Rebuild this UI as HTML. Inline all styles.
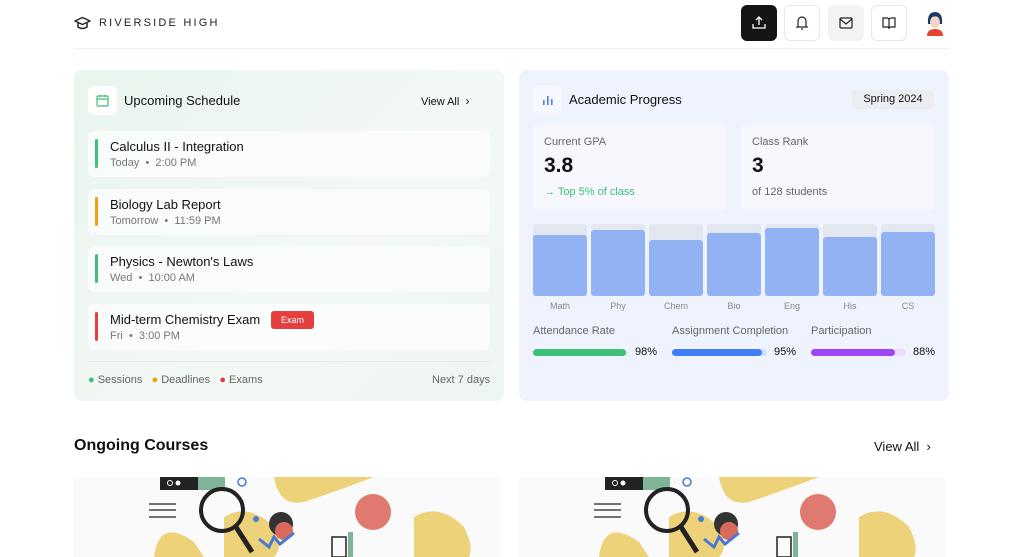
<!DOCTYPE html>
<html><head><meta charset="utf-8"><style>
*{box-sizing:border-box;margin:0;padding:0}
body{width:1024px;height:557px;overflow:hidden;background:#fff;font-family:"Liberation Sans",sans-serif;color:#111;position:relative}
.abs{position:absolute}
.btn{position:absolute;top:5px;width:36px;height:36px;border-radius:6px;border:1px solid #e8e8e8;background:#fff;display:flex;align-items:center;justify-content:center}
.card{position:absolute;border-radius:8px}
.item{position:absolute;left:14px;width:402px;height:46px;background:rgba(255,255,255,.65);border-radius:6px}
.item .bar{position:absolute;left:7px;top:8px;width:3px;height:29px;border-radius:2px}
.item .t{position:absolute;left:22px;top:8px;font-size:13px;color:#111}
.item .s{position:absolute;left:22px;top:26px;font-size:11px;color:#777}
.lbl{font-size:11px;color:#666}
.col{position:absolute;top:154px;width:54px;height:72px;background:#e3e8f0;border-radius:3px;overflow:hidden}
.col div{position:absolute;bottom:0;left:0;right:0;background:#93b2f4;border-radius:3px 3px 0 0}
.cn{position:absolute;top:231px;width:54px;text-align:center;font-size:9px;color:#888}
</style></head><body>
<svg class="abs" style="left:74px;top:16px" width="17" height="14" viewBox="0 0 17 14"><path d="M1 5 L8.5 1.5 L16 5 L8.5 8.5 Z" fill="none" stroke="#222" stroke-width="1.5" stroke-linejoin="round"/><path d="M4 7 V11 Q8.5 14 13 11 V7" fill="none" stroke="#222" stroke-width="1.5"/></svg>
<div class="abs" style="left:99px;top:17px;font-size:11px;letter-spacing:2.2px;color:#222">RIVERSIDE HIGH</div>
<div class="btn" style="left:741px;background:#141414;border-color:#141414"><svg width="14" height="14" viewBox="0 0 14 14" fill="none" stroke="#fff" stroke-width="1.3"><path d="M7 9V1M4 4l3-3 3 3M1 8v4h12V8"/></svg></div>
<div class="btn" style="left:784px"><svg width="14" height="16" viewBox="0 0 14 16" fill="none" stroke="#222" stroke-width="1.2"><path d="M3 11V6a4 4 0 0 1 8 0v5l1 1H2z"/><path d="M6 14h2"/></svg></div>
<div class="btn" style="left:828px;background:#f3f3f3;border-color:#f3f3f3"><svg width="14" height="12" viewBox="0 0 14 12" fill="none" stroke="#222" stroke-width="1.2"><rect x="1" y="1" width="12" height="10" rx="1"/><path d="M1 2l6 5 6-5"/></svg></div>
<div class="btn" style="left:871px"><svg width="14" height="12" viewBox="0 0 14 12" fill="none" stroke="#222" stroke-width="1.2"><path d="M1 1h4a2 2 0 0 1 2 2v8a2 2 0 0 0-2-1H1zM13 1H9a2 2 0 0 0-2 2v8a2 2 0 0 1 2-1h4z"/></svg></div>
<svg class="abs" style="left:924px;top:10px" width="22" height="26" viewBox="0 0 22 26"><path d="M4 14 Q3 2 11 2 Q19 2 18 14 Z" fill="#1d3a66"/><ellipse cx="11" cy="12" rx="5" ry="6" fill="#f3d6c8"/><path d="M5 9 Q11 2 17 9 Q14 5 8 7Z" fill="#1d3a66"/><path d="M3 26 Q3 19 11 19 Q19 19 19 26 Z" fill="#e6452f"/></svg>
<div class="abs" style="left:74px;top:48px;width:876px;height:1px;background:#eee"></div>

<div class="card" style="left:74px;top:70px;width:430px;height:331px;background:linear-gradient(135deg,#e9f5ee,#f3f8f5 60%,#eef6f1)">
 <div class="abs" style="left:14px;top:16px;width:29px;height:29px;background:#fff;border-radius:6px;display:flex;align-items:center;justify-content:center"><svg width="13" height="13" viewBox="0 0 13 13" fill="none" stroke="#3fbf7a" stroke-width="1.2"><rect x="1" y="2" width="11" height="10" rx="1"/><path d="M1 5h11M4 1v2M9 1v2"/></svg></div>
 <div class="abs" style="left:50px;top:23px;font-size:13px">Upcoming Schedule</div>
 <div class="abs" style="left:347px;top:24px;font-size:11px">View All &nbsp;<span style="font-size:12px">›</span></div>
 <div class="item" style="top:61px"><div class="bar" style="background:#3fbf7a"></div><div class="t">Calculus II - Integration</div><div class="s">Today &nbsp;•&nbsp; 2:00 PM</div></div>
 <div class="item" style="top:119px"><div class="bar" style="background:#f29d12"></div><div class="t">Biology Lab Report</div><div class="s">Tomorrow &nbsp;•&nbsp; 11:59 PM</div></div>
 <div class="item" style="top:176px"><div class="bar" style="background:#3fbf7a"></div><div class="t">Physics - Newton's Laws</div><div class="s">Wed &nbsp;•&nbsp; 10:00 AM</div></div>
 <div class="item" style="top:234px"><div class="bar" style="background:#e53e3e"></div><div class="t">Mid-term Chemistry Exam</div><div class="s">Fri &nbsp;•&nbsp; 3:00 PM</div><div class="abs" style="left:183px;top:7px;width:43px;height:18px;background:#e53e3e;border-radius:3px;color:#fff;font-size:9px;text-align:center;line-height:18px">Exam</div></div>
 <div class="abs" style="left:14px;top:291px;width:402px;height:1px;background:#e4ece7"></div>
 <div class="abs lbl" style="left:14px;top:304px"><span style="color:#3fbf7a">●</span> Sessions &nbsp; <span style="color:#f29d12">●</span> Deadlines &nbsp; <span style="color:#e53e3e">●</span> Exams</div>
 <div class="abs lbl" style="left:358px;top:304px">Next 7 days</div>
</div>

<div class="card" style="left:519px;top:70px;width:430px;height:331px;background:#eef3fd">
 <div class="abs" style="left:14px;top:15px;width:29px;height:29px;background:#f6f8fe;border-radius:6px;display:flex;align-items:center;justify-content:center"><svg width="10" height="10" viewBox="0 0 10 10" fill="#4a7ef0"><rect x="0" y="5" width="1.6" height="5"/><rect x="4" y="1" width="1.6" height="9"/><rect x="8" y="4" width="1.6" height="6"/></svg></div>
 <div class="abs" style="left:50px;top:22px;font-size:13px">Academic Progress</div>
 <div class="abs" style="left:333px;top:20px;width:82px;height:19px;background:#ebedf0;border-radius:4px;font-size:11px;text-align:center;line-height:19px">Spring 2024</div>
 <div class="abs" style="left:14px;top:54px;width:194px;height:86px;background:#f6f8fd;border-radius:6px">
  <div class="abs lbl" style="left:11px;top:12px">Current GPA</div>
  <div class="abs" style="left:11px;top:30px;font-size:21px;font-weight:bold">3.8</div>
  <div class="abs" style="left:11px;top:62px;font-size:11px;color:#3fbf7a">→ Top 5% of class</div>
 </div>
 <div class="abs" style="left:222px;top:54px;width:194px;height:86px;background:#f6f8fd;border-radius:6px">
  <div class="abs lbl" style="left:11px;top:12px">Class Rank</div>
  <div class="abs" style="left:11px;top:30px;font-size:21px;font-weight:bold">3</div>
  <div class="abs lbl" style="left:11px;top:62px">of 128 students</div>
 </div>
 <div class="col" style="left:14px"><div style="height:61px"></div></div>
 <div class="col" style="left:72px"><div style="height:66px"></div></div>
 <div class="col" style="left:130px"><div style="height:56px"></div></div>
 <div class="col" style="left:188px"><div style="height:63px"></div></div>
 <div class="col" style="left:246px"><div style="height:68px"></div></div>
 <div class="col" style="left:304px"><div style="height:59px"></div></div>
 <div class="col" style="left:362px"><div style="height:64px"></div></div>
 <div class="cn" style="left:14px">Math</div><div class="cn" style="left:72px">Phy</div><div class="cn" style="left:130px">Chem</div><div class="cn" style="left:188px">Bio</div><div class="cn" style="left:246px">Eng</div><div class="cn" style="left:304px">His</div><div class="cn" style="left:362px">CS</div>
 <div class="abs lbl" style="left:14px;top:255px">Attendance Rate</div>
 <div class="abs lbl" style="left:153px;top:255px">Assignment Completion</div>
 <div class="abs lbl" style="left:292px;top:255px">Participation</div>
 <div class="abs" style="left:14px;top:279px;width:95px;height:7px;border-radius:4px;background:#d8f1e3"><div style="width:93px;height:7px;border-radius:4px;background:#3fbf7a"></div></div>
 <div class="abs" style="left:116px;top:276px;font-size:11px">98%</div>
 <div class="abs" style="left:153px;top:279px;width:95px;height:7px;border-radius:4px;background:#cfe0fd"><div style="width:90px;height:7px;border-radius:4px;background:#3f7ef5"></div></div>
 <div class="abs" style="left:255px;top:276px;font-size:11px">95%</div>
 <div class="abs" style="left:292px;top:279px;width:95px;height:7px;border-radius:4px;background:#eadcfd"><div style="width:84px;height:7px;border-radius:4px;background:#9f45f5"></div></div>
 <div class="abs" style="left:394px;top:276px;font-size:11px">88%</div>
</div>

<div class="abs" style="left:74px;top:437px;font-size:16px;font-weight:bold">Ongoing Courses</div>
<div class="abs" style="left:874px;top:439px;font-size:13px">View All &nbsp;›</div>

<svg class="abs" style="left:74px;top:477px" width="426" height="80" viewBox="0 0 426 80"><g id="ill">
<rect width="426" height="80" fill="#fafafa"/>
<path d="M200 0 Q205 30 230 25 Q260 15 300 0Z" fill="#eed27a"/>
<path d="M80 80 Q85 40 120 65 L130 80Z" fill="#eed27a"/>
<path d="M150 40 Q175 25 200 50 Q210 70 200 80 L150 80Z" fill="#eed27a"/>
<path d="M340 40 Q365 25 390 50 Q400 70 395 80 L340 80Z" fill="#eed27a"/>
<circle cx="299" cy="35" r="18" fill="#e07a6e"/>
<rect x="86" y="0" width="38" height="13" fill="#222"/><rect x="124" y="0" width="27" height="13" fill="#7fb596"/>
<circle cx="96" cy="6" r="2.5" fill="none" stroke="#fff"/><circle cx="104" cy="6" r="2.5" fill="#fff"/>
<path d="M75 27h27M75 33h27M75 40h27" stroke="#222" stroke-width="1.3"/>
<circle cx="148" cy="33" r="21" fill="none" stroke="#222" stroke-width="4"/>
<path d="M162 50 L178 75" stroke="#222" stroke-width="5"/>
<circle cx="168" cy="5" r="4" fill="none" stroke="#4a7ad0" stroke-width="1.5"/>
<circle cx="182" cy="42" r="3" fill="#4a7ad0"/>
<circle cx="207" cy="47" r="12" fill="#333"/><circle cx="210" cy="54" r="9" fill="#d9695b"/>
<path d="M185 62 L195 70 L200 60 L206 67 L220 56" stroke="#4a7ad0" stroke-width="3" fill="none"/>
<rect x="258" y="60" width="14" height="20" fill="none" stroke="#222" stroke-width="1.5"/>
<rect x="274" y="55" width="5" height="25" fill="#7fb596"/>
</g></svg>
<svg class="abs" style="left:519px;top:477px" width="426" height="80" viewBox="0 0 426 80"><use href="#ill"/></svg>
</body></html>
